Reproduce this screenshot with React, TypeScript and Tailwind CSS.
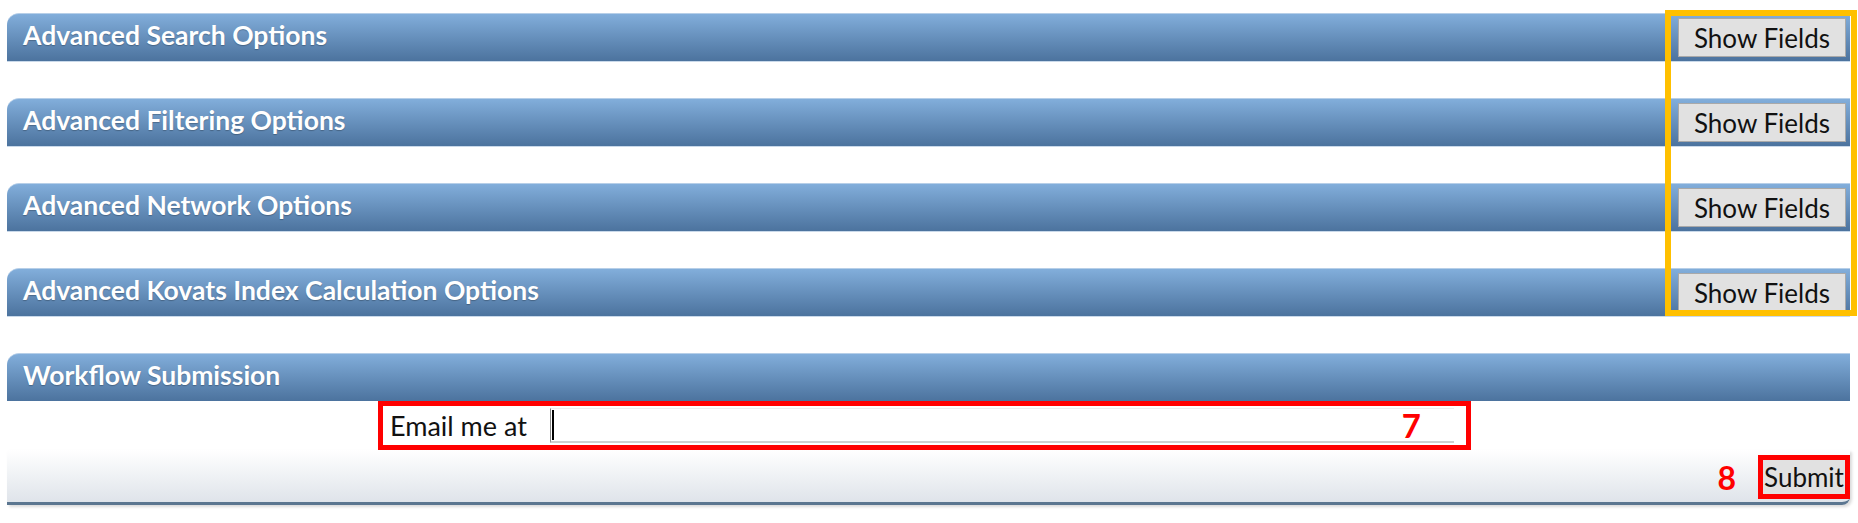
const sections = [
  "Advanced Search Options",
  "Advanced Filtering Options",
  "Advanced Network Options",
  "Advanced Kovats Index Calculation Options",
];

function SectionBar({ title, button }: { title: string; button?: boolean }) {
  return (
    <div className="flex h-[48px] items-center justify-between rounded-tl-[12px] border-t border-[#b7cfe8] bg-linear-to-b from-[#82aedb] to-[#4c739e] pl-[16px] pr-[4px] shadow-[0_1px_0_#c9d9ea]">
      <span className="pb-[4px] text-[26.5px] font-bold leading-none text-white [text-shadow:0_1px_1px_rgba(0,0,0,0.25)]">
        {title}
      </span>
      {button && (
        <button className="h-[39px] w-[168px] border border-[#a9a9a9] bg-[#e1e1e1] text-[26px] leading-none text-[#111]">
          Show Fields
        </button>
      )}
    </div>
  );
}

export default function App() {
  return (
    <div className="relative h-[523px] w-full bg-white pl-[7px] pr-[8px] pt-[13px] font-['Lato','Liberation_Sans',sans-serif]">
      <div className="flex flex-col gap-[37px]">
        {sections.map((s) => (
          <SectionBar key={s} title={s} button />
        ))}

        <div className="flex flex-col">
          <SectionBar title="Workflow Submission" />

          {/* email row */}
          <div className="flex h-[49px] justify-center bg-white pr-[8px]">
            <div className="flex h-[49px] w-[1093px] items-center border-[5px] border-[#ff0000]">
              <span className="w-[167px] pl-[7px] text-[27px] leading-none text-[#111]">Email me at</span>
              <div className="relative h-[35px] w-[904px] border-b-2 border-l border-t border-b-[#cfcfcf] border-l-[#888] border-t-[#eeeeee] bg-white">
                <div className="ml-[1px] mt-[1px] h-[30px] w-[2px] bg-black" />
                <span className="absolute right-[33px] top-1/2 -translate-y-1/2 text-[33px] font-bold leading-none text-[#ff0000]">
                  7
                </span>
              </div>
            </div>
          </div>

          {/* submit row */}
          <div className="flex h-[55px] items-start justify-end gap-[22px] rounded-br-[8px] border-b-[3px] border-[#5b7690] bg-linear-to-b from-white to-[#dfe4ea] pt-[5px] shadow-[2px_2px_3px_rgba(0,0,0,0.15)]">
            <span className="mt-[7px] text-[32px] font-bold leading-none text-[#ff0000]">8</span>
            <div className="flex h-[44px] w-[92px] items-center justify-center border-[5px] border-[#ff0000] bg-[#e1e1e1]">
              <span className="text-[26px] leading-none text-[#111]">Submit</span>
            </div>
          </div>
        </div>
      </div>

      {/* yellow highlight around the Show Fields buttons */}
      <div className="pointer-events-none absolute right-[1px] top-[10px] h-[306px] w-[192px] border-[6px] border-[#ffc000]" />
    </div>
  );
}
